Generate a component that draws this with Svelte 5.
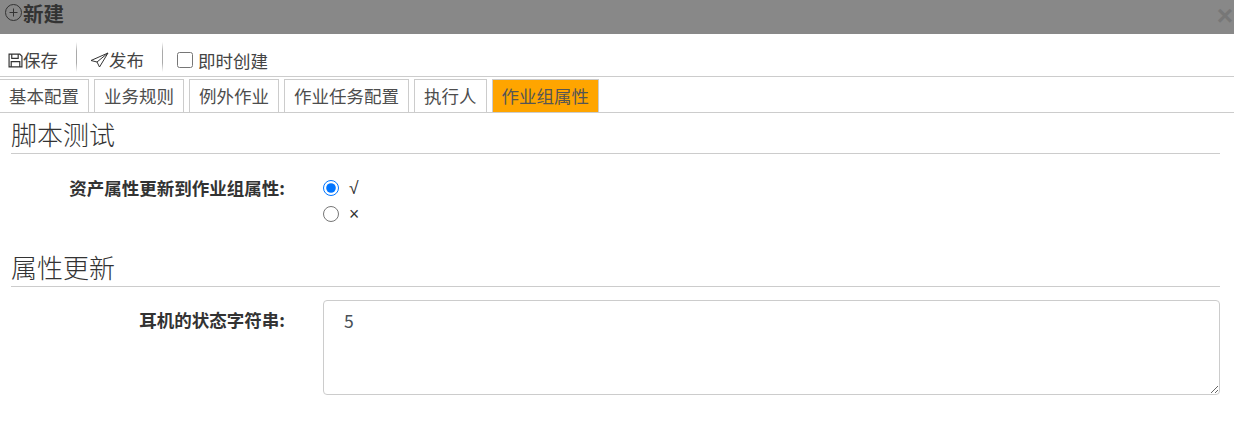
<script>
  const tabs = ["基本配置", "业务规则", "例外作业", "作业任务配置", "执行人", "作业组属性"];
  let active = 5;
  let choice = $state("yes");
  let now = $state(false);
  let text = $state("5");
</script>

<div class="page">
  <header class="title">
    <svg class="plus" width="19" height="19" viewBox="0 0 19 19" fill="none" stroke="#333" stroke-width="1">
      <circle cx="9.5" cy="9.5" r="8" />
      <path d="M5.500 9.500h8M9.500 5.500v8" />
    </svg>
    <strong>新建</strong>
    <span class="close">×</span>
  </header>

  <div class="toolbar">
    <button class="tool">
      <svg width="15" height="15" viewBox="0 0 14 14" fill="none" stroke="#333" stroke-width="1.100">
        <path d="M1 1h10l2 2v10H1z" />
        <path d="M3.500 1v4h6V1M3 13V8h8v5" />
      </svg>保存
    </button>
    <i class="sep"></i>
    <button class="tool send">
      <svg width="19" height="16" viewBox="0 0 19 16" fill="none" stroke="#333" stroke-width="1">
        <path d="M18 1 1 8.500l6 1.500 2.500 5zM18 1 7 10" />
      </svg>发布
    </button>
    <i class="sep"></i>
    <label class="now"><input type="checkbox" bind:checked={now} />即时创建</label>
  </div>

  <nav class="tabs">
    {#each tabs as tab, i}
      <button class="tab" class:active={i === active}>{tab}</button>
    {/each}
  </nav>

  <section>
    <h2>脚本测试</h2>
    <div class="field radios">
      <span class="label">资产属性更新到作业组属性:</span>
      <div class="options">
        <label><input type="radio" name="sync" value="yes" bind:group={choice} />√</label>
        <label><input type="radio" name="sync" value="no" bind:group={choice} />×</label>
      </div>
    </div>
  </section>

  <section class="second">
    <h2>属性更新</h2>
    <div class="field">
      <span class="label offset">耳机的状态字符串:</span>
      <textarea bind:value={text}></textarea>
    </div>
  </section>
</div>

<style>
  :global(body) {
    margin: 0;
    background: #fff;
  }
  .page {
    font-family: "Noto Sans CJK SC", "Noto Sans", sans-serif;
    font-size: 17.5px;
    color: #333;
    height: 424px;
    overflow: hidden;
  }
  .title {
    height: 34px;
    box-sizing: border-box;
    background: #888;
    display: flex;
    align-items: flex-start;
    padding: 3px 0 0 4px;
    color: #333;
  }
  .plus {
    flex: none;
  }
  .title strong {
    font-family: "Liberation Sans", "Noto Sans CJK SC", sans-serif;
    font-size: 20.500px;
    line-height: 24px;
  }
  .close {
    margin-left: auto;
    margin-right: 1px;
    margin-top: -1px;
    font: bold 28px/28px "Liberation Sans", sans-serif;
    color: #777;
  }
  .toolbar {
    height: 43px;
    box-sizing: border-box;
    border-bottom: 1px solid #ccc;
    display: flex;
    align-items: center;
    padding: 10px 0 0 8px;
    color: #444;
  }
  .tool {
    all: unset;
    display: flex;
    align-items: center;
    line-height: 24px;
  }
  .tool.send {
    margin-left: -1px;
  }
  .sep {
    width: 1px;
    height: 30px;
    background: linear-gradient(#fff, #aaa 30%, #aaa 70%, #fff);
    margin: -6px 14px 0 18px;
  }
  .now {
    display: flex;
    align-items: center;
  }
  .now input {
    width: 16px;
    height: 16px;
    margin: 0 5px 0 0;
  }
  .tabs {
    height: 36px;
    box-sizing: border-box;
    border-bottom: 1px solid #ccc;
    display: flex;
    gap: 5px;
    padding-top: 2px;
  }
  .tab {
    all: unset;
    box-sizing: border-box;
    height: 33px;
    padding: 0 9px;
    border: 1px solid #ccc;
    border-bottom: none;
    line-height: 30px;
    color: #4d4d4d;
  }
  .tab:first-child {
    border-left: none;
  }
  .tab.active {
    background: #ffa500;
    color: #555;
  }
  section {
    padding: 0 14px 0 11px;
  }
  h2 {
    margin: 0;
    height: 41px;
    box-sizing: border-box;
    border-bottom: 1px solid #ccc;
    font-size: 26px;
    font-weight: 300;
    line-height: 42px;
    color: #333;
  }
  .field {
    display: grid;
    grid-template-columns: 274px 1fr;
    column-gap: 38px;
    margin-top: 13px;
  }
  .radios {
    margin-top: 22px;
  }
  .label {
    text-align: right;
    font-weight: 700;
    line-height: 24px;
  }
  .label.offset {
    padding-top: 8px;
  }
  .options {
    display: flex;
    flex-direction: column;
    gap: 2px;
    font-family: "Liberation Sans", sans-serif;
  }
  .options label {
    display: flex;
    align-items: center;
    height: 24px;
  }
  .options input {
    width: 16px;
    height: 16px;
    margin: 0 10px 0 0;
  }
  .second {
    margin-top: 20px;
  }
  textarea {
    box-sizing: border-box;
    height: 95px;
    width: 100%;
    border: 1px solid #ccc;
    border-radius: 4px;
    padding: 7px 20px;
    font: inherit;
    color: #495057;
    outline: none;
  }
</style>
